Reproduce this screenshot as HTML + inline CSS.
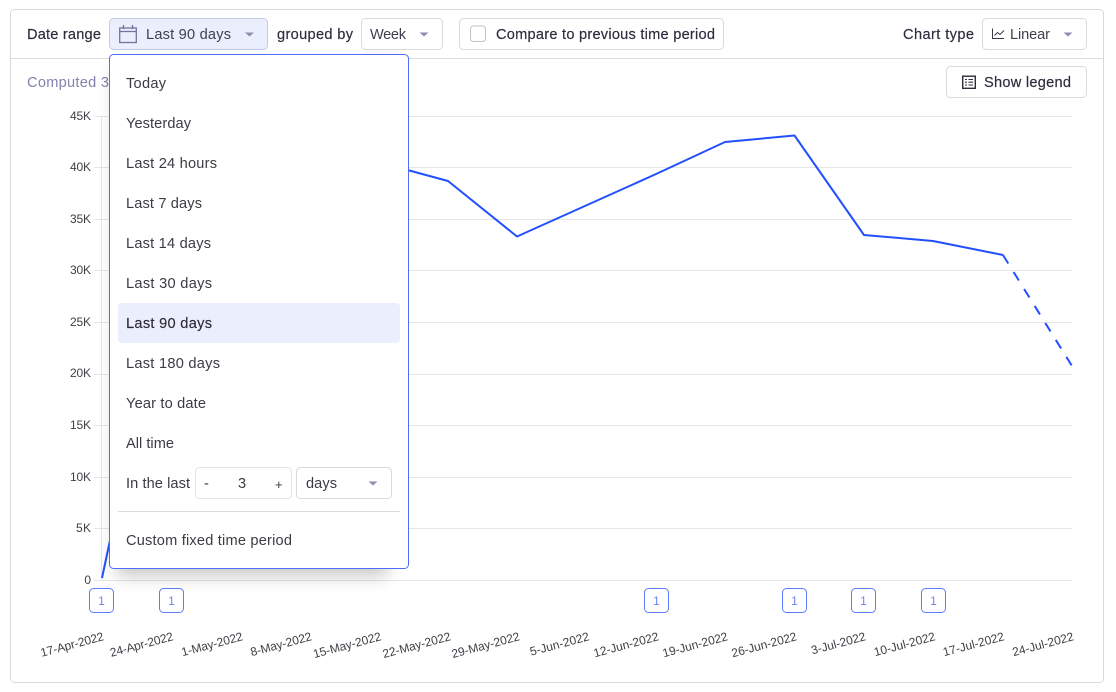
<!DOCTYPE html>
<html>
<head>
<meta charset="utf-8">
<style>
html,body{margin:0;padding:0;background:#fff;width:1116px;height:692px;overflow:hidden}
svg{display:block}
text{font-family:"Liberation Sans",sans-serif;font-size:14.6px;fill:#2d2d3f}
.b{stroke:#2d2d3f;stroke-width:.18}
.m{fill:#3b3b42}
.a{font-size:12px;fill:#3f3f46}
.n{font-size:12px;fill:#6d83f5;text-anchor:middle}
</style>
</head>
<body>
<svg width="1116" height="692" viewBox="0 0 1116 692" xmlns="http://www.w3.org/2000/svg">
<defs>
<filter id="s" x="-20%" y="-20%" width="140%" height="140%"><feGaussianBlur stdDeviation="9"/></filter>
</defs>
<rect x="10.500" y="9.500" width="1093" height="673" rx="4" fill="#fff" stroke="#d9d9d9"/>
<line x1="11" y1="58.500" x2="1103" y2="58.500" stroke="#dcdcdc"/>

<!-- grid -->
<g stroke="#e6e6e6" fill="none">
<path d="M94 116.500H1072M94 167.500H1072M94 219.500H1072M94 270.500H1072M94 322.500H1072M94 374.500H1072M94 425.500H1072M94 477.500H1072M94 528.500H1072M94 580.500H1072M101.500 116V580"/>
</g>
<g class="y">
<text class="a" x="91" y="120" text-anchor="end" textLength="21">45K</text>
<text class="a" x="91" y="171" text-anchor="end" textLength="21">40K</text>
<text class="a" x="91" y="223" text-anchor="end" textLength="21">35K</text>
<text class="a" x="91" y="274" text-anchor="end" textLength="21">30K</text>
<text class="a" x="91" y="326" text-anchor="end" textLength="21">25K</text>
<text class="a" x="91" y="377" text-anchor="end" textLength="21">20K</text>
<text class="a" x="91" y="429" text-anchor="end" textLength="21">15K</text>
<text class="a" x="91" y="481" text-anchor="end" textLength="21">10K</text>
<text class="a" x="91" y="532" text-anchor="end" textLength="15">5K</text>
<text class="a" x="91" y="584" text-anchor="end">0</text>
</g>

<!-- line -->
<g fill="none" stroke="#2250ff" stroke-width="2" stroke-linejoin="round">
<path d="M102 578L125 470L400 168L448 181L517 236.500L655 174.500L725 142L794.500 135.500L864 235L933 241L1003 255"/>
<path d="M1003 255L1072 366" stroke-dasharray="10 10"/>
</g>

<!-- annotations -->
<g fill="#fff" stroke="#5c7cff" stroke-width="1">
<rect x="89.500" y="588.500" width="24" height="24" rx="4"/>
<rect x="159.500" y="588.500" width="24" height="24" rx="4"/>
<rect x="644.500" y="588.500" width="24" height="24" rx="4"/>
<rect x="782.500" y="588.500" width="24" height="24" rx="4"/>
<rect x="851.500" y="588.500" width="24" height="24" rx="4"/>
<rect x="921.500" y="588.500" width="24" height="24" rx="4"/>
</g>
<text class="n" x="101.500" y="605">1</text>
<text class="n" x="171.500" y="605">1</text>
<text class="n" x="656.500" y="605">1</text>
<text class="n" x="794.500" y="605">1</text>
<text class="n" x="863.500" y="605">1</text>
<text class="n" x="933.500" y="605">1</text>

<!-- x labels -->
<g>
<text class="a" transform="translate(104.500 640) rotate(-15)" text-anchor="end" textLength="65">17-Apr-2022</text>
<text class="a" transform="translate(174 640) rotate(-15)" text-anchor="end" textLength="65">24-Apr-2022</text>
<text class="a" transform="translate(243.500 640) rotate(-15)" text-anchor="end" textLength="63">1-May-2022</text>
<text class="a" transform="translate(312.500 640) rotate(-15)" text-anchor="end" textLength="63">8-May-2022</text>
<text class="a" transform="translate(382 640) rotate(-15)" text-anchor="end" textLength="70">15-May-2022</text>
<text class="a" transform="translate(451.500 640) rotate(-15)" text-anchor="end" textLength="70">22-May-2022</text>
<text class="a" transform="translate(520.500 640) rotate(-15)" text-anchor="end" textLength="70">29-May-2022</text>
<text class="a" transform="translate(590 640) rotate(-15)" text-anchor="end" textLength="61">5-Jun-2022</text>
<text class="a" transform="translate(659.500 640) rotate(-15)" text-anchor="end" textLength="67">12-Jun-2022</text>
<text class="a" transform="translate(728.500 640) rotate(-15)" text-anchor="end" textLength="67">19-Jun-2022</text>
<text class="a" transform="translate(797.500 640) rotate(-15)" text-anchor="end" textLength="67">26-Jun-2022</text>
<text class="a" transform="translate(866.500 640) rotate(-15)" text-anchor="end" textLength="56">3-Jul-2022</text>
<text class="a" transform="translate(936 640) rotate(-15)" text-anchor="end" textLength="63">10-Jul-2022</text>
<text class="a" transform="translate(1005 640) rotate(-15)" text-anchor="end" textLength="63">17-Jul-2022</text>
<text class="a" transform="translate(1074.500 640) rotate(-15)" text-anchor="end" textLength="63">24-Jul-2022</text>
</g>

<!-- toolbar -->
<text class="b" x="27" y="39" textLength="74">Date range</text>
<rect x="109.500" y="18.500" width="158" height="31" rx="4" fill="#ebeefc" stroke="#c6cbe4"/>
<g fill="none" stroke="#71749c" stroke-width="1.300">
<rect x="119.700" y="28" width="16.600" height="14.500"/>
<path d="M119.700 31.500H136.300M123.500 25V29M132.500 25V29"/>
</g>
<text x="146" y="39" style="fill:#3f3f50" textLength="85">Last 90 days</text>
<path d="M245 32.500H254L249.500 36.500Z" fill="#8a8eb0"/>
<text class="b" x="277" y="39" textLength="76">grouped by</text>
<rect x="361.500" y="18.500" width="81" height="31" rx="4" fill="#fff" stroke="#d9d9de"/>
<text x="370" y="39" style="fill:#3f3f50" textLength="36">Week</text>
<path d="M419.500 32.500H428.500L424 36.500Z" fill="#8a8eb0"/>
<rect x="459.500" y="18.500" width="264" height="31" rx="4" fill="#fff" stroke="#d9d9de"/>
<rect x="470.500" y="26" width="15" height="15.500" rx="3" fill="#fff" stroke="#c2c2c8"/>
<text class="b" x="496" y="39" textLength="219">Compare to previous time period</text>
<text class="b" x="903" y="39" textLength="71">Chart type</text>
<rect x="982.500" y="18.500" width="104" height="31" rx="4" fill="#fff" stroke="#d9d9de"/>
<path d="M992.500 28.500V38.500H1004M994.500 35.500L997.500 32.500L1000 34.500L1004 30.500" fill="none" stroke="#3a3a48" stroke-width="1"/>
<text x="1010" y="39" style="fill:#3f3f50" textLength="40">Linear</text>
<path d="M1063.500 32.500H1072.500L1068 36.500Z" fill="#8a8eb0"/>

<text x="27" y="87" style="fill:#8083ad" textLength="82">Computed 3</text>
<rect x="946.500" y="66.500" width="140" height="31" rx="4" fill="#fff" stroke="#d9d9de"/>
<g fill="none" stroke="#2d2d3a">
<rect x="962.700" y="76.200" width="12.600" height="12.100" stroke-width="1.400"/>
<path d="M965 79.500H967M965 82.200H967M965 85H967M968.500 79.500H973M968.500 82.200H973M968.500 85H973" stroke-width="1.100"/>
</g>
<text class="b" x="984" y="87" textLength="87">Show legend</text>

<!-- dropdown -->
<rect x="116" y="66" width="272" height="510" rx="4" fill="#000" opacity=".22" filter="url(#s)"/>
<rect x="109.500" y="54.500" width="299" height="514" rx="4" fill="#fff" stroke="#4d6dfa"/>
<rect x="118" y="303" width="282" height="40" rx="4" fill="#ebeefd"/>
<text class="m" x="126" y="88" textLength="40">Today</text>
<text class="m" x="126" y="128" textLength="65">Yesterday</text>
<text class="m" x="126" y="168" textLength="91">Last 24 hours</text>
<text class="m" x="126" y="208" textLength="76">Last 7 days</text>
<text class="m" x="126" y="248" textLength="85">Last 14 days</text>
<text class="m" x="126" y="288" textLength="86">Last 30 days</text>
<text x="126" y="328" textLength="86" style="fill:#2c2c36;stroke:#2c2c36;stroke-width:.15">Last 90 days</text>
<text class="m" x="126" y="368" textLength="94">Last 180 days</text>
<text class="m" x="126" y="408" textLength="80">Year to date</text>
<text class="m" x="126" y="448" textLength="48">All time</text>
<text class="m" x="126" y="488" textLength="64">In the last</text>
<rect x="195.500" y="467.500" width="96" height="31" rx="4" fill="#fff" stroke="#e4e4e8"/>
<text class="m" x="204" y="488">-</text>
<text class="m" x="242" y="488" text-anchor="middle">3</text>
<text class="m" x="275" y="489" style="font-size:13px">+</text>
<rect x="296.500" y="467.500" width="95" height="31" rx="4" fill="#fff" stroke="#d9d9de"/>
<text class="m" x="306" y="488" textLength="31">days</text>
<path d="M368.500 481.500H377.500L373 485.500Z" fill="#8a8eb0"/>
<line x1="118" y1="511.500" x2="400" y2="511.500" stroke="#dcdcdc"/>
<text class="m" x="126" y="545" textLength="166">Custom fixed time period</text>
</svg>
</body>
</html>
